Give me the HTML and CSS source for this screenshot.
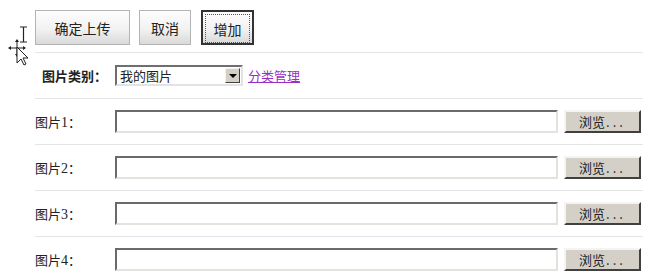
FILE: index.html
```html
<!DOCTYPE html>
<html lang="zh-CN">
<head>
  <meta charset="UTF-8">
  <title>上传图片</title>
  <link rel="stylesheet" href="styles.css">
</head>
<body>
  <div class="cursor">
    <svg width="32" height="70" viewBox="0 0 32 70">
      <!-- I-beam -->
      <path d="M20 27h7M23.5 27v15M20 42h7" stroke="#222" stroke-width="1.2" fill="none"/>
      <!-- move cross -->
      <path d="M9 48h16M17 40v16" stroke="#222" stroke-width="1" fill="none"/>
      <path d="M17 39l-2 3h4zM17 57l-2-3h4zM8 48l3-2v4zM26 48l-3-2v4z" fill="#222"/>
      <!-- arrow -->
      <path d="M17 47v16l4-4 3 6 2-1-3-6h5z" fill="#fff" stroke="#222" stroke-width="1"/>
    </svg>
  </div>

  <div class="uploader">
    <div class="toolbar">
      <button type="button" class="btn btn-upload">确定上传</button>
      <button type="button" class="btn btn-cancel">取消</button>
      <button type="button" class="btn btn-focus"><span>增加</span></button>
    </div>

    <div class="row category">
      <label class="cat-label">图片类别：</label>
      <div class="select">
        <span>我的图片</span>
        <i class="arrow"></i>
      </div>
      <a href="#" class="manage">分类管理</a>
    </div>

    <div class="row">
      <label class="pic-label">图片<em>1</em>：</label>
      <div class="file-input"></div>
      <button type="button" class="browse">浏览<span>...</span></button>
    </div>
    <div class="row">
      <label class="pic-label">图片<em>2</em>：</label>
      <div class="file-input"></div>
      <button type="button" class="browse">浏览<span>...</span></button>
    </div>
    <div class="row">
      <label class="pic-label">图片<em>3</em>：</label>
      <div class="file-input"></div>
      <button type="button" class="browse">浏览<span>...</span></button>
    </div>
    <div class="row">
      <label class="pic-label">图片<em>4</em>：</label>
      <div class="file-input"></div>
      <button type="button" class="browse">浏览<span>...</span></button>
    </div>
  </div>
</body>
</html>
```

FILE: styles.css
```css
body {
  margin: 0;
  padding: 0;
  background: #fff;
  font-family: "Noto Sans CJK SC", "DejaVu Sans", sans-serif;
  color: #222;
  overflow: hidden;
}
.cursor {
  position: absolute;
  left: 0;
  top: 0;
}
.uploader {
  margin-left: 35px;
  width: 608px;
}
.toolbar {
  display: flex;
  gap: 9px;
  padding: 10px 0 7px;
  border-bottom: 1px solid #e4e4e4;
}
.btn {
  box-sizing: border-box;
  height: 35px;
  padding: 0;
  font-family: inherit;
  font-size: 14px;
  color: #222;
  background: linear-gradient(#fdfdfd, #f2f2f2 55%, #d9d9d9);
  border: 1px solid #b4b4b4;
  border-radius: 0;
  cursor: pointer;
}
.btn-upload {
  width: 95px;
}
.btn-cancel {
  width: 52px;
}
.btn-focus {
  width: 53px;
  margin-left: 1px;
  border: 2px solid #333;
  padding: 2px;
}
.btn-focus span {
  display: flex;
  align-items: center;
  justify-content: center;
  height: 100%;
  border: 1px dotted #555;
}
.row {
  display: flex;
  align-items: center;
  height: 45px;
  border-bottom: 1px solid #e4e4e4;
}
.row:last-child {
  border-bottom: none;
}
.cat-label {
  margin-left: 7px;
  width: 73px;
  font-size: 13px;
  font-weight: bold;
}
.select {
  display: flex;
  align-items: center;
  justify-content: space-between;
  box-sizing: border-box;
  width: 128px;
  height: 21px;
  padding: 0 1px 0 3px;
  font-size: 13px;
  border: 2px solid;
  border-color: #6f6f6f #e3e3e3 #e3e3e3 #6f6f6f;
  background: #fff;
}
.arrow {
  position: relative;
  width: 15px;
  height: 15px;
  box-sizing: border-box;
  background: #d4d0c8;
  border: 1px solid;
  border-color: #f4f4f4 #404040 #404040 #f4f4f4;
}
.arrow::after {
  content: "";
  position: absolute;
  left: 3px;
  top: 5px;
  border-left: 4px solid transparent;
  border-right: 4px solid transparent;
  border-top: 4px solid #000;
}
.manage {
  margin-left: 5px;
  font-size: 13px;
  color: #9b2fc4;
}
.pic-label {
  width: 80px;
  font-size: 13px;
}
.pic-label em {
  font-style: normal;
  font-family: "Liberation Serif", serif;
  font-size: 14px;
}
.file-input {
  box-sizing: border-box;
  width: 443px;
  height: 23px;
  border: 2px solid;
  border-color: #6a6a6a #e4e2dc #e4e2dc #6a6a6a;
  background: #fff;
}
.browse {
  box-sizing: border-box;
  width: 77px;
  height: 23px;
  margin-left: 6px;
  padding: 0;
  font-family: inherit;
  font-size: 13px;
  color: #222;
  background: #d4d0c8;
  border: 2px solid;
  border-color: #f4f4f4 #404040 #404040 #f4f4f4;
  border-radius: 0;
}
.browse span {
  margin-left: 1px;
  letter-spacing: 3px;
}
```
